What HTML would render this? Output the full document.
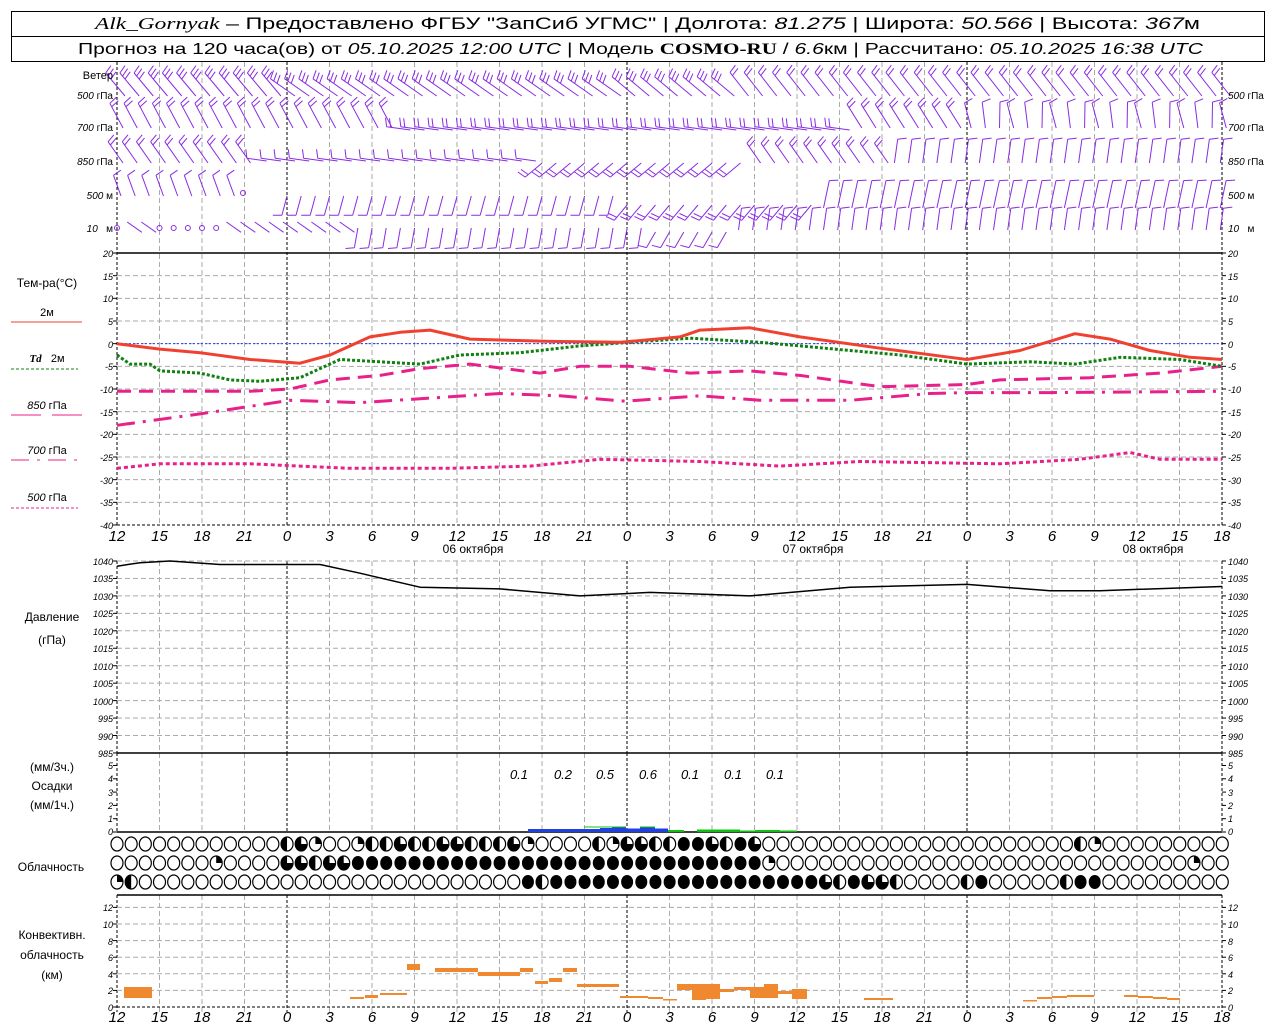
<!DOCTYPE html>
<html><head><meta charset="utf-8"><style>
html,body{margin:0;padding:0;background:#fff;}
svg{display:block;font-family:"Liberation Sans",sans-serif;}
</style></head><body>
<svg id="s" width="1280" height="1024" viewBox="0 0 1280 1024" xmlns="http://www.w3.org/2000/svg">
<rect x="0" y="0" width="1280" height="1024" fill="#fff"/>
<rect x="11.5" y="11.5" width="1253" height="50" fill="none" stroke="#000" stroke-width="1"/>
<line x1="11" y1="36.5" x2="1265" y2="36.5" stroke="#000"/>
<text x="95" y="29" font-size="17" textLength="1105" lengthAdjust="spacingAndGlyphs"><tspan font-style="italic" font-family="Liberation Serif">Alk_Gornyak</tspan> – Предоставлено ФГБУ "ЗапСиб УГМС" | Долгота: <tspan font-style="italic">81.275</tspan> | Широта: <tspan font-style="italic">50.566</tspan> | Высота: <tspan font-style="italic">367</tspan>м</text>
<text x="78" y="54" font-size="16" textLength="1125" lengthAdjust="spacingAndGlyphs">Прогноз на 120 часа(ов) от <tspan font-style="italic">05.10.2025 12:00 UTC</tspan> | Модель <tspan font-weight="bold" font-family="Liberation Serif">COSMO-RU</tspan> / <tspan font-style="italic">6.6</tspan>км | Рассчитано: <tspan font-style="italic">05.10.2025 16:38 UTC</tspan></text>
<g id="grid"></g>
<g id="dyn"></g>
<g font-size="11" text-anchor="end">
<text x="113" y="79">Ветер</text>
<text x="113" y="99" font-size="10"><tspan font-style="italic">500</tspan> гПа</text>
<text x="113" y="131" font-size="10"><tspan font-style="italic">700</tspan> гПа</text>
<text x="113" y="165" font-size="10"><tspan font-style="italic">850</tspan> гПа</text>
<text x="113" y="199" font-size="10"><tspan font-style="italic">500</tspan> м</text>
<text x="113" y="232" font-size="10"><tspan font-style="italic">10</tspan>&#160;&#160; м</text>
</g>
<g font-size="10" text-anchor="start">
<text x="1228" y="99"><tspan font-style="italic">500</tspan> гПа</text>
<text x="1228" y="131"><tspan font-style="italic">700</tspan> гПа</text>
<text x="1228" y="165"><tspan font-style="italic">850</tspan> гПа</text>
<text x="1228" y="199"><tspan font-style="italic">500</tspan> м</text>
<text x="1228" y="232"><tspan font-style="italic">10</tspan>&#160;&#160; м</text>
</g>
<g font-size="9" font-style="italic" text-anchor="end">
<text x="113" y="257">20</text><text x="113" y="280">15</text><text x="113" y="302">10</text><text x="113" y="325">5</text><text x="113" y="348">0</text><text x="113" y="370">-5</text><text x="113" y="393">-10</text><text x="113" y="416">-15</text><text x="113" y="438">-20</text><text x="113" y="461">-25</text><text x="113" y="484">-30</text><text x="113" y="506">-35</text><text x="113" y="529">-40</text>
<text x="113" y="565">1040</text><text x="113" y="582">1035</text><text x="113" y="600">1030</text><text x="113" y="617">1025</text><text x="113" y="635">1020</text><text x="113" y="652">1015</text><text x="113" y="670">1010</text><text x="113" y="687">1005</text><text x="113" y="705">1000</text><text x="113" y="722">995</text><text x="113" y="740">990</text><text x="113" y="757">985</text>
<text x="113" y="769">5</text><text x="113" y="782">4</text><text x="113" y="796">3</text><text x="113" y="809">2</text><text x="113" y="822">1</text><text x="113" y="835">0</text>
<text x="113" y="911">12</text><text x="113" y="928">10</text><text x="113" y="945">8</text><text x="113" y="961">6</text><text x="113" y="978">4</text><text x="113" y="994">2</text><text x="113" y="1011">0</text>
</g>
<g font-size="9" font-style="italic" text-anchor="start">
<text x="1228" y="257">20</text><text x="1228" y="280">15</text><text x="1228" y="302">10</text><text x="1228" y="325">5</text><text x="1228" y="348">0</text><text x="1228" y="370">-5</text><text x="1228" y="393">-10</text><text x="1228" y="416">-15</text><text x="1228" y="438">-20</text><text x="1228" y="461">-25</text><text x="1228" y="484">-30</text><text x="1228" y="506">-35</text><text x="1228" y="529">-40</text>
<text x="1228" y="565">1040</text><text x="1228" y="582">1035</text><text x="1228" y="600">1030</text><text x="1228" y="617">1025</text><text x="1228" y="635">1020</text><text x="1228" y="652">1015</text><text x="1228" y="670">1010</text><text x="1228" y="687">1005</text><text x="1228" y="705">1000</text><text x="1228" y="722">995</text><text x="1228" y="740">990</text><text x="1228" y="757">985</text>
<text x="1228" y="769">5</text><text x="1228" y="782">4</text><text x="1228" y="796">3</text><text x="1228" y="809">2</text><text x="1228" y="822">1</text><text x="1228" y="835">0</text>
<text x="1228" y="911">12</text><text x="1228" y="928">10</text><text x="1228" y="945">8</text><text x="1228" y="961">6</text><text x="1228" y="978">4</text><text x="1228" y="994">2</text><text x="1228" y="1011">0</text>
</g>
<g font-size="12" text-anchor="middle">
<text x="47" y="287">Тем-ра(°C)</text>
<text x="47" y="316" font-size="11">2м</text>
<text x="47" y="362" font-size="11"><tspan font-style="italic" font-weight="bold" font-family="Liberation Serif">Td</tspan>&#160;&#160; 2м</text>
<text x="47" y="409" font-size="11"><tspan font-style="italic">850</tspan> гПа</text>
<text x="47" y="454" font-size="11"><tspan font-style="italic">700</tspan> гПа</text>
<text x="47" y="501" font-size="11"><tspan font-style="italic">500</tspan> гПа</text>
<text x="52" y="621">Давление</text>
<text x="52" y="644">(гПа)</text>
<text x="52" y="771">(мм/3ч.)</text>
<text x="52" y="790">Осадки</text>
<text x="52" y="809">(мм/1ч.)</text>
<text x="51" y="871">Облачность</text>
<text x="52" y="939">Конвективн.</text>
<text x="52" y="959">облачность</text>
<text x="52" y="979">(км)</text>
<text x="473" y="553">06 октября</text>
<text x="813" y="553">07 октября</text>
<text x="1153" y="553">08 октября</text>
</g>
<line x1="11" y1="322" x2="82" y2="322" stroke="#f04030" stroke-width="1"/>
<line x1="11" y1="369" x2="78" y2="369" stroke="#108010" stroke-dasharray="3,2"/>
<line x1="11" y1="415" x2="41" y2="415" stroke="#e8208a"/><line x1="52" y1="415" x2="82" y2="415" stroke="#e8208a"/>
<line x1="11" y1="460" x2="78" y2="460" stroke="#e8208a" stroke-dasharray="18,8,3,8"/>
<line x1="11" y1="508" x2="78" y2="508" stroke="#e8208a" stroke-dasharray="3,2"/>
<g font-size="13" font-style="italic" text-anchor="middle">
<text x="519" y="779">0.1</text><text x="563" y="779">0.2</text><text x="605" y="779">0.5</text><text x="648" y="779">0.6</text><text x="690" y="779">0.1</text><text x="733" y="779">0.1</text><text x="775" y="779">0.1</text>
</g>
<g font-size="15" font-style="italic" text-anchor="middle">
<text x="117" y="541">12</text><text x="159.5" y="541">15</text><text x="202" y="541">18</text><text x="244.5" y="541">21</text><text x="287" y="541">0</text><text x="329.5" y="541">3</text><text x="372" y="541">6</text><text x="414.5" y="541">9</text><text x="457" y="541">12</text><text x="499.5" y="541">15</text><text x="542" y="541">18</text><text x="584.5" y="541">21</text><text x="627" y="541">0</text><text x="669.5" y="541">3</text><text x="712" y="541">6</text><text x="754.5" y="541">9</text><text x="797" y="541">12</text><text x="839.5" y="541">15</text><text x="882" y="541">18</text><text x="924.5" y="541">21</text><text x="967" y="541">0</text><text x="1009.5" y="541">3</text><text x="1052" y="541">6</text><text x="1094.5" y="541">9</text><text x="1137" y="541">12</text><text x="1179.5" y="541">15</text><text x="1222" y="541">18</text>
</g>
<g font-size="15" font-style="italic" text-anchor="middle">
<text x="117" y="1022">12</text><text x="159.5" y="1022">15</text><text x="202" y="1022">18</text><text x="244.5" y="1022">21</text><text x="287" y="1022">0</text><text x="329.5" y="1022">3</text><text x="372" y="1022">6</text><text x="414.5" y="1022">9</text><text x="457" y="1022">12</text><text x="499.5" y="1022">15</text><text x="542" y="1022">18</text><text x="584.5" y="1022">21</text><text x="627" y="1022">0</text><text x="669.5" y="1022">3</text><text x="712" y="1022">6</text><text x="754.5" y="1022">9</text><text x="797" y="1022">12</text><text x="839.5" y="1022">15</text><text x="882" y="1022">18</text><text x="924.5" y="1022">21</text><text x="967" y="1022">0</text><text x="1009.5" y="1022">3</text><text x="1052" y="1022">6</text><text x="1094.5" y="1022">9</text><text x="1137" y="1022">12</text><text x="1179.5" y="1022">15</text><text x="1222" y="1022">18</text>
</g>
</svg>
<script>
(function(){
var NS="http://www.w3.org/2000/svg";
var G=document.getElementById("grid"),D=document.getElementById("dyn");
function el(p,n,a){var e=document.createElementNS(NS,n);for(var k in a)e.setAttribute(k,a[k]);p.appendChild(e);return e;}
function L(p,x1,y1,x2,y2,st,w,da){var a={x1:x1,y1:y1,x2:x2,y2:y2,stroke:st,"stroke-width":w||1};if(da)a["stroke-dasharray"]=da;return el(p,"line",a);}
var X0=117,X1=1222,DX=42.5;
var spans=[[62,525],[561,753],[753,832],[895,1012]];
for(var k=0;k<=26;k++){var x=X0+k*DX;var day=(k%8==4)||k==0||k==26;
 spans.forEach(function(s){L(G,x,s[0],x,s[1],day?"#000":"#aaa",1,day?"3,2":"5,3");});}
for(var T=15;T>=-40;T-=5){var y=253+(20-T)*4.533;L(G,X0,y,X1,y,T==-40?"#000":"#aaa",1,T==-40?"3,2":"5,3");}
for(var p=1040;p>=990;p-=5){var y=561+(1040-p)*3.49;L(G,X0,y,X1,y,"#aaa",1,"5,3");}
for(var km=2;km<=12;km+=2){var y=1007-km*8.3;L(G,X0,y,X1,y,"#aaa",1,"5,3");}
L(G,X0,1007,X1,1007,"#000",1,"3,2");
L(G,X0,253,X1,253,"#000",1.5);L(G,X0,753,X1,753,"#000",1.5);L(G,X0,832,X1,832,"#000",1.5);L(G,X0,895,X1,895,"#000",1.5);
for(var T=20;T>=-40;T-=5){var y=253+(20-T)*4.533;L(G,X0-4,y,X0,y,"#000");L(G,X1,y,X1+4,y,"#000");}
for(var p=1040;p>=985;p-=5){var y=561+(1040-p)*3.49;L(G,X0-4,y,X0,y,"#000");L(G,X1,y,X1+4,y,"#000");}
for(var m=0;m<=5;m++){var y=832-m*13.3;L(G,X0-4,y,X0,y,"#000");L(G,X1,y,X1+4,y,"#000");}
for(var km=0;km<=12;km+=2){var y=1007-km*8.3;L(G,X0-4,y,X0,y,"#000");L(G,X1,y,X1+4,y,"#000");}
function ty(T){return 253+(20-T)*4.533;}
function curve(pts,fy,st,w,da){var s=pts.map(function(q){return q[0]+","+fy(q[1]).toFixed(1);}).join(" ");var a={points:s,fill:"none",stroke:st,"stroke-width":w,"stroke-linejoin":"round"};if(da)a["stroke-dasharray"]=da;el(D,"polyline",a);}
L(D,X0,ty(0),X1,ty(0),"#2040ff",1,"2,2");
curve([[117,-27.5],[160,-26.5],[250,-26.5],[300,-27],[350,-27.5],[450,-27.5],[530,-27],[600,-25.5],[700,-26],[780,-27],[860,-26],[1000,-26.5],[1080,-25.5],[1130,-24],[1160,-25.5],[1222,-25.5]],ty,"#e8208a",3,"4,3");
curve([[117,-18],[200,-15.5],[290,-12.5],[360,-13],[430,-12],[500,-11],[560,-11.5],[625,-12.7],[700,-11.5],[760,-12.5],[850,-12.5],[930,-11],[967,-10.8],[1050,-10.8],[1222,-10.5]],ty,"#e8208a",3,"18,8,3,8");
curve([[117,-10.5],[250,-10.5],[290,-10],[330,-8],[380,-7],[420,-5.5],[470,-4.5],[540,-6.5],[580,-5],[630,-5],[690,-6.5],[750,-6],[800,-7],[880,-9.5],[967,-9],[1000,-8],[1090,-7.5],[1160,-6.5],[1222,-5]],ty,"#e8208a",3,"14,8");
curve([[117,-2.5],[130,-4.5],[150,-4.5],[160,-6],[200,-6.5],[230,-8],[260,-8.3],[300,-7.5],[340,-3.5],[380,-4],[420,-4.5],[460,-2.5],[520,-2],[580,-0.5],[630,0.3],[690,1.2],[760,0.3],[800,-0.5],[850,-1.5],[900,-2.5],[967,-4.5],[1030,-4],[1075,-4.5],[1120,-3],[1180,-3.5],[1222,-5]],ty,"#108010",3,"3,2");
curve([[117,0],[160,-1.2],[200,-2],[250,-3.5],[300,-4.3],[330,-2.5],[370,1.5],[400,2.5],[430,3],[470,1],[550,0.5],[620,0.3],[680,1.5],[700,3],[750,3.5],[800,1.5],[880,-1],[950,-3],[967,-3.5],[1020,-1.5],[1075,2.2],[1110,1],[1150,-1.5],[1190,-3],[1222,-3.5]],ty,"#f04030",3);
function py(p){return 561+(1040-p)*3.49;}
curve([[117,1038.5],[140,1039.5],[170,1040],[220,1039],[320,1039],[360,1036.5],[420,1032.5],[500,1032],[580,1030],[650,1031],[750,1030],[850,1032.5],[967,1033.3],[1050,1031.5],[1100,1031.5],[1222,1032.7]],py,"#000",1.5);
[[528,600,829,"#2040e0"],[600,612,828,"#2040e0"],[612,626,826.5,"#2040e0"],[626,640,828.5,"#2040e0"],[640,655,827,"#2040e0"],[655,668,828.5,"#2040e0"],[668,684,830,"#10c010"],[697,740,829.5,"#10c010"],[740,755,830.5,"#10c010"],[755,780,830,"#10c010"],[780,797,830.5,"#10c010"]].forEach(function(b){el(D,"rect",{x:b[0],y:b[2],width:b[1]-b[0],height:832-b[2],fill:b[3]});});
[[584,600],[600,612],[612,626],[640,655]].forEach(function(b){L(D,b[0],827,b[1],827,"#10c010",1);});
[[124,152,987,998],[350,364,997,999],[365,378,995,998],[380,407,993,995],[407,420,964,970],[435,478,968,972],[478,520,972,976],[520,533,968,972],[535,548,981,984],[549,562,978,982],[563,577,968,972],[577,619,984,987],[620,648,996,998],[648,663,997,999],[663,677,999,1000],[677,692,984,990],[692,706,984,1000],[706,720,984,999],[720,734,989,992],[734,750,987,990],[750,764,987,998],[764,778,984,998],[778,792,991,994],[792,807,989,999],[864,893,998,1000],[1023,1037,1000,1001],[1037,1052,997,999],[1052,1067,996,998],[1067,1094,995,997],[1124,1138,995,997],[1138,1153,996,998],[1153,1167,997,999],[1167,1180,998,1000]].forEach(function(b){el(D,"rect",{x:b[0],y:b[2],width:b[1]-b[0],height:Math.max(1.5,b[3]-b[2]),fill:"#f08830"});});
var rows=[];
rows[0]="oooooooooooo"+"htqooqhhthhtthhhtqoooo"+"hqtthhffthft"+"oooooooooooooooooooooo"+"hq"+"ooooooooo";
rows[1]="ooooooo"+"q"+"oooo"+"tthtt"+"fffffffffffffffffffffffffffff"+"q"+"ooooooooooooooooooooooooooooo"+"q"+"oo";
rows[2]="qh"+"ooooooooooooooooooooooooooo"+"fh"+"fffffffffffffffffff"+"thftth"+"oooo"+"hf"+"ooooo"+"hff"+"ooooooooo";
var cy=[844,863,882];
function sector(cx,y,rx,ry,a0,a1){var p="M"+cx+","+y;for(var a=a0;a<=a1+0.01;a+=10){var r=a*Math.PI/180;p+=" L"+(cx+rx*Math.sin(r)).toFixed(2)+","+(y-ry*Math.cos(r)).toFixed(2);}return p+"Z";}
for(var r=0;r<3;r++){for(var i=0;i<79;i++){var c=rows[r][i]||"o";var x=117+i*14.17,y=cy[r];
 if(c=="f"){el(D,"ellipse",{cx:x,cy:y,rx:6,ry:7,fill:"#000"});continue;}
 el(D,"ellipse",{cx:x,cy:y,rx:6,ry:7,fill:"#fff",stroke:"#000","stroke-width":1.2});
 if(c=="q")el(D,"path",{d:sector(x,y,6,7,0,90),fill:"#000"});
 if(c=="h")el(D,"path",{d:sector(x,y,6,7,180,360),fill:"#000"});
 if(c=="t")el(D,"path",{d:sector(x,y,6,7,90,360),fill:"#000"});
}}
var W="#8a2be2";
function barb(x,y,ang,n,len){var r=ang*Math.PI/180;var ex=x+len*Math.sin(r),ey=y-len*Math.cos(r);
 var d="M"+x.toFixed(1)+","+y.toFixed(1)+" L"+ex.toFixed(1)+","+ey.toFixed(1);
 for(var b=0;b<n;b++){var bx=x+(len-b*4)*Math.sin(r),by=y-(len-b*4)*Math.cos(r);var ra=(ang+75)*Math.PI/180;
  d+=" M"+bx.toFixed(1)+","+by.toFixed(1)+" L"+(bx+9*Math.sin(ra)).toFixed(1)+","+(by-9*Math.cos(ra)).toFixed(1);}
 el(D,"path",{d:d,fill:"none",stroke:W,"stroke-width":1});}
function calm(x,y){el(D,"circle",{cx:x,cy:y,r:2.5,fill:"none",stroke:W,"stroke-width":1});}
for(var i=0;i<79;i++){var x=117+i*14.17;
 var a=-40,n=3; if(i>=12&&i<36){a=-55;n=3;} if(i>=36&&i<44){a=-50;n=3;} if(i>=44){a=-38;n=2;}
 barb(x+8,96,a,n,30);
 if(i<20)barb(x+6,128,-28,2,28); else if(i<52)barb(x+10,130,-82,2,24); else if(i<60)barb(x+8,128,-32,2,28); else barb(x+4,128,-15+((i%3)*8),1,26);
 if(i<10)barb(x+6,163,-35,2,26); else if(i<30)barb(x+8,161,-82,1,20); else if(i<45)barb(x,163,-130,2,22); else if(i<55)barb(x+6,163,-35,2,24); else barb(x-2,163,8,1,24);
 if(i<9)barb(x+4,196,-20,1,22); else if(i==9)calm(243,193); else if(i<12){} else if(i<36)barb(x,196,195,1,20); else if(i<50)barb(x,205,-140,2,20); else barb(x-2,208,12,1,28);
 if(i==0)calm(117,228); else if(i>=3&&i<=7)calm(117+i*14.17,228); else if(i<3||(i>=8&&i<17))barb(x-4,222,125,0,18); else if(i<38)barb(x,228,190,1,20); else if(i<44)barb(x,232,-150,1,18); else barb(x-2,230,8,1,22);
}
})();
</script>
</body></html>
